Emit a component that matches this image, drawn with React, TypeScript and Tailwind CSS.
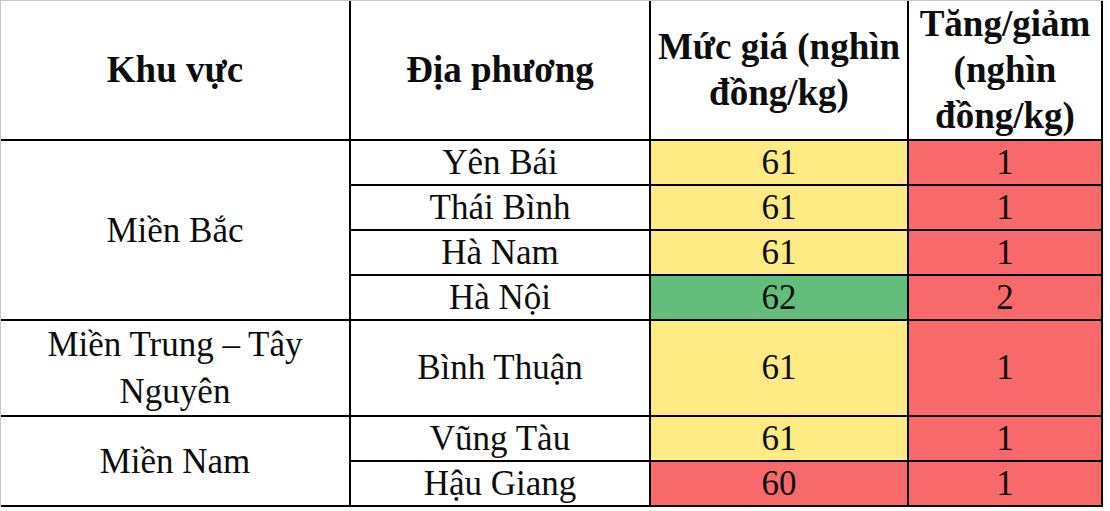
import React from "react";

type Row = {
  region?: { name: string; span: number };
  place: string;
  price: string;
  priceColor: string;
  change: string;
  h: string;
};

const Y = "bg-[#FFEB84]";
const G = "bg-[#63BE7B]";
const R = "bg-[#F8696B]";

const rows: Row[] = [
  { region: { name: "Miền Bắc", span: 4 }, place: "Yên Bái", price: "61", priceColor: Y, change: "1", h: "h-[45px]" },
  { place: "Thái Bình", price: "61", priceColor: Y, change: "1", h: "h-[45px]" },
  { place: "Hà Nam", price: "61", priceColor: Y, change: "1", h: "h-[45px]" },
  { place: "Hà Nội", price: "62", priceColor: G, change: "2", h: "h-[45px]" },
  { region: { name: "Miền Trung – Tây Nguyên", span: 1 }, place: "Bình Thuận", price: "61", priceColor: Y, change: "1", h: "h-[95px]" },
  { region: { name: "Miền Nam", span: 2 }, place: "Vũng Tàu", price: "61", priceColor: Y, change: "1", h: "h-[45px]" },
  { place: "Hậu Giang", price: "60", priceColor: R, change: "1", h: "h-[45px]" },
];

const serif = "font-['Liberation_Serif','Times_New_Roman',serif]";

export default function App() {
  return (
    <div className={`w-[1110px] h-[511px] bg-white overflow-hidden ${serif}`}>
      <div className="w-[1103px] h-[506px] border-t border-l border-[#c6c6c6]">
        <table className={`table-fixed border-collapse text-[#0d0d0d] leading-[46px] ${serif}`}>
          <colgroup>
            <col className="w-[349px]" />
            <col className="w-[300px]" />
            <col className="w-[258px]" />
            <col className="w-[194px]" />
          </colgroup>
          <thead>
            <tr className="h-[138px]">
              <th className={`border-[2.5px] border-black border-t-0 border-l-0 text-center align-middle font-bold text-[37px] ${serif}`}>Khu vực</th>
              <th className={`border-[2.5px] border-black border-t-0 text-center align-middle font-bold text-[37px] ${serif}`}>Địa phương</th>
              <th className={`border-[2.5px] border-black border-t-0 text-center align-middle font-bold text-[37px] ${serif}`}>Mức giá (nghìn đồng/kg)</th>
              <th className={`border-[2.5px] border-black border-t-0 text-center align-middle font-bold text-[37px] ${serif}`}>Tăng/giảm (nghìn đồng/kg)</th>
            </tr>
          </thead>
          <tbody>
            {rows.map((r, i) => (
              <tr key={i} className={r.h}>
                {r.region && (
                  <td
                    rowSpan={r.region.span}
                    className={`border-[2.5px] border-black border-l-0 text-center align-middle px-2 text-[35px] leading-[47px] ${serif}`}
                  >
                    {r.region.name}
                  </td>
                )}
                <td className={`border-[2.5px] border-black text-center align-middle text-[35px] leading-[40px] ${serif}`}>{r.place}</td>
                <td className={`border-[2.5px] border-black text-center align-middle text-[35px] leading-[40px] ${serif} ${r.priceColor}`}>{r.price}</td>
                <td className={`border-[2.5px] border-black text-center align-middle text-[35px] leading-[40px] bg-[#F8696B] ${serif}`}>{r.change}</td>
              </tr>
            ))}
          </tbody>
        </table>
      </div>
    </div>
  );
}
